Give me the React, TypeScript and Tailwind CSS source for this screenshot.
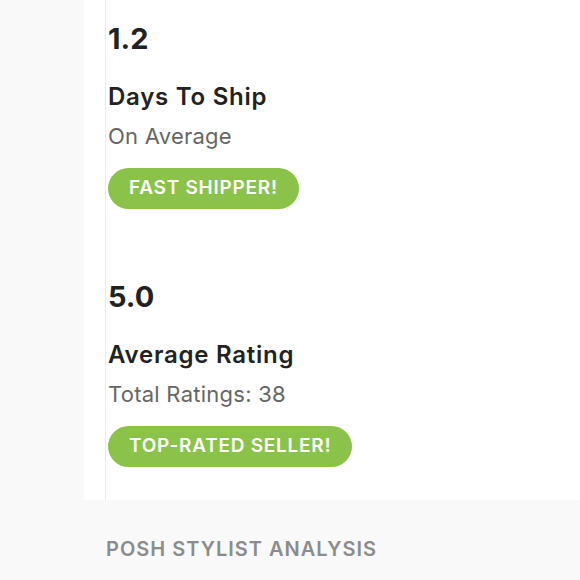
import React from "react";

function Stat({ value, title, sub, badge }: { value: string; title: string; sub: string; badge: string }) {
  return (
    <div className="flex flex-col items-start">
      <div className="text-[29px] leading-[36px] font-bold text-[#222]">{value}</div>
      <div className="mt-[27px] text-[24px] leading-[26px] font-semibold tracking-[0.75px] text-[#222]">{title}</div>
      <div className="mt-[14px] text-[22px] leading-[24px] tracking-[0.25px] text-[#666]">{sub}</div>
      <div className="mt-[20px] h-[41px] px-[21px] rounded-full bg-[#8bc34a] text-white text-[19px] font-semibold tracking-[0.75px] flex items-center">
        {badge}
      </div>
    </div>
  );
}

export default function App() {
  return (
    <div
      className="w-[580px] h-[580px] bg-[#f9f9f9] overflow-hidden flex flex-col"
      style={{ fontFamily: "Inter, 'Open Sans', sans-serif" }}
    >
      <div className="ml-[84px] h-[500px] bg-white pl-[21px] flex">
        <div className="border-l border-[#ececec] pl-[2px] pt-[21px] flex-1 flex flex-col">
          <Stat value="1.2" title="Days To Ship" sub="On Average" badge="FAST SHIPPER!" />
          <div className="mt-[70px]">
            <Stat value="5.0" title="Average Rating" sub="Total Ratings: 38" badge="TOP-RATED SELLER!" />
          </div>
        </div>
      </div>
      <div className="pl-[106px] pt-[37px] text-[20px] leading-[24px] font-semibold tracking-[1px] text-[#8c8c8c]">
        POSH STYLIST ANALYSIS
      </div>
    </div>
  );
}
